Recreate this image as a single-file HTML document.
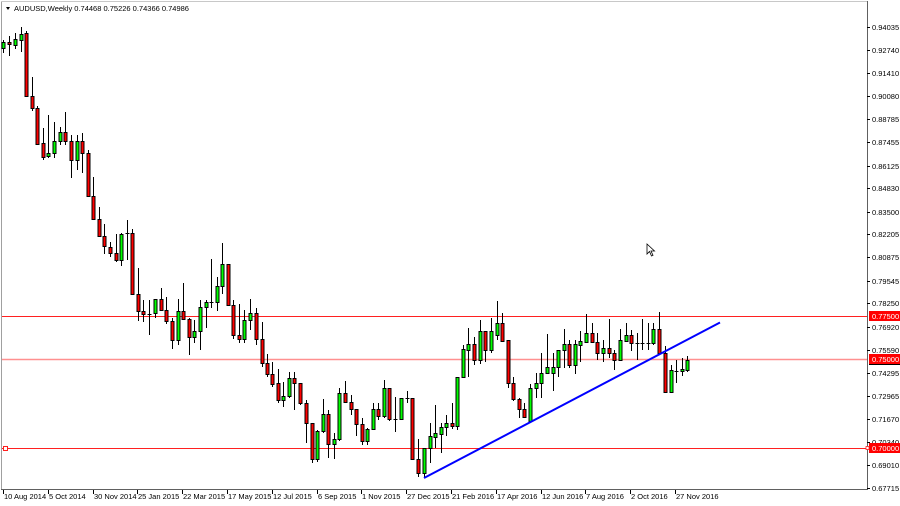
<!DOCTYPE html>
<html><head><meta charset="utf-8"><style>
html,body{margin:0;padding:0;background:#fff;width:900px;height:506px;overflow:hidden}
svg{display:block}
text{font-family:"Liberation Sans","DejaVu Sans",sans-serif;font-size:7.5px;fill:#000}
</style></head><body>
<svg id="s" width="900" height="506" xmlns="http://www.w3.org/2000/svg">
<rect x="0" y="0" width="900" height="506" fill="#fff"/>
<line x1="1.5" y1="1" x2="1.5" y2="490" stroke="#a0a0a0"/>
<line x1="1" y1="1.5" x2="868" y2="1.5" stroke="#c8c8c8"/>
<line x1="867.5" y1="1" x2="867.5" y2="490" stroke="#606060"/>
<line x1="1" y1="489.5" x2="868" y2="489.5" stroke="#606060"/>
<polygon points="6,7 10,7 8,10" fill="#000"/>
<text x="14" y="11">AUDUSD,Weekly  0.74468 0.75226 0.74366 0.74986</text>
<g id="lines">
<line x1="2" y1="316.5" x2="867" y2="316.5" stroke="#ff2020"/>
<line x1="2" y1="359.5" x2="867" y2="359.5" stroke="#ff9090" stroke-width="1.5"/>
<line x1="2" y1="448.5" x2="867" y2="448.5" stroke="#ff2020"/>
<rect x="3.5" y="446.5" width="4" height="4" fill="#fff" stroke="#ff2020"/>
</g>
<g id="c"></g>
<line x1="424" y1="478" x2="720" y2="322.5" stroke="#0000ff" stroke-width="2"/>
<g id="ax"></g>
<g transform="translate(647,244)"><path d="M0,0 L0,10 L2.5,7.5 L4.5,12 L6,11.3 L4,7 L7.5,7 Z" fill="#fff" stroke="#000" stroke-width="0.8"/></g>
<rect x="869" y="311" width="31" height="10" fill="#ff0000"/>
<text x="872" y="319" style="fill:#fff">0.77500</text>
<rect x="869" y="354" width="31" height="10" fill="#ff0000"/>
<line x1="869" y1="364.5" x2="900" y2="364.5" stroke="#000"/>
<text x="872" y="362" style="fill:#fff">0.75000</text>
<rect x="869" y="443" width="31" height="10" fill="#ff0000"/>
<text x="872" y="451" style="fill:#fff">0.70000</text>
<rect x="866" y="446.5" width="3" height="3" fill="#fff" stroke="#ff2020" stroke-width="0.8"/>
</svg>
<script>
var ns="http://www.w3.org/2000/svg";
function el(p,t,a,tx){var e=document.createElementNS(ns,t);for(var k in a)e.setAttribute(k,a[k]);if(tx)e.textContent=tx;p.appendChild(e);return e;}
var d=[
[3,48,42,40,53],[9,42,44,36,56],[15,45,39,33,49],[21,40,34,27,52],[26,33,96,31,96],[32,96,108,77,111],
[37,108,144,106,145],[43,143,157,128,160],[48,156,153,115,158],[54,153,141,122,158],[60,141,132,127,145],
[65,132,141,112,145],[71,141,160,135,178],[77,160,141,135,170],[82,141,153,133,173],[88,153,196,150,197],
[93,196,219,177,220],[99,219,236,207,237],[104,236,246,224,254],[110,247,253,242,257],[116,253,260,234,262],
[121,260,234,233,266],[127,233,233,220,260],[132,233,294,229,295],[138,294,311,268,321],[143,311,314,300,322],
[149,314,314,300,335],[155,313,299,299,318],[161,299,310,288,310],[166,310,321,297,324],[172,321,340,318,349],
[178,340,311,299,345],[183,311,319,283,320],[189,319,337,318,355],[194,337,331,320,343],[200,331,307,300,350],
[206,307,302,300,328],[211,302,302,259,308],[217,302,286,277,311],[222,286,264,243,294],[228,264,305,264,306],
[233,305,335,300,339],[239,335,339,304,343],[244,339,320,310,343],[250,320,313,299,330],[256,313,339,308,345],
[262,339,363,322,367],[267,363,374,354,377],[272,374,384,362,387],[278,383,400,369,403],[283,400,396,382,407],
[289,396,378,372,398],[294,378,383,372,410],[300,383,403,383,405],[306,403,423,400,443],[312,423,459,423,463],
[317,459,431,430,462],[323,431,414,399,433],[328,414,444,410,458],[334,444,439,433,459],[339,439,393,388,441],
[345,393,402,381,403],[351,402,409,395,415],[356,409,424,409,436],[362,424,441,418,445],[367,441,429,428,445],
[373,429,409,403,430],[378,409,416,403,420],[384,416,388,380,418],[389,388,419,388,421],[395,419,419,397,432],
[401,419,398,398,420],[407,398,398,391,403],[412,398,459,398,460],[418,459,473,439,477],[424,473,448,450,478],
[430,448,436,423,463],[435,437,433,405,448],[441,434,427,423,453],[446,427,423,415,436],[452,423,426,403,429],
[457,426,377,377,430],[463,377,349,345,377],[468,350,344,328,377],[474,344,360,337,365],[480,360,331,320,364],
[485,331,350,331,362],[491,350,331,318,353],[497,335,323,301,340],[502,323,341,313,342],[508,340,383,340,388],
[513,383,399,377,401],[519,399,409,398,418],[524,409,417,403,417],[530,421,388,384,421],[536,388,383,373,398],
[541,383,373,353,398],[547,373,367,334,373],[553,373,367,353,391],[558,367,350,350,377],[564,350,344,329,368],
[569,344,365,340,368],[575,365,344,340,374],[580,345,341,331,362],[586,342,333,314,342],[592,333,342,323,343],
[597,342,353,333,360],[603,353,348,340,362],[609,348,353,319,358],[614,353,360,350,370],[620,360,340,329,360],
[626,341,335,323,342],[631,335,343,330,351],[637,343,343,333,360],[642,343,343,319,350],[648,343,343,323,350],
[653,343,329,323,345],[659,329,353,312,354],[665,353,392,346,393],[671,392,370,365,393],[676,371,371,360,383],
[682,371,369,358,376],[687,370,360,356,372]
];
var g=document.getElementById("c");
d.forEach(function(a){var x=a[0],o=a[1],c=a[2],h=a[3],l=a[4];
el(g,"line",{x1:x+0.5,y1:h,x2:x+0.5,y2:l,stroke:"#000","stroke-width":1});
var t=Math.min(o,c),b=Math.max(o,c);
if(b-t<1){el(g,"line",{x1:x-1.5,y1:t+0.5,x2:x+2.5,y2:t+0.5,stroke:"#000"});}
else el(g,"rect",{x:x-1,y:t+0.5,width:3,height:b-t,fill:o>c?"#00ff00":"#ff0000",stroke:"#000","stroke-width":1});
});
var ax=document.getElementById("ax");
var lab=["0.94035","0.92740","0.91410","0.90080","0.88785","0.87455","0.86125","0.84830","0.83500","0.82205","0.80875","0.79545","0.78250","0.76920","0.75590","0.74295","0.72965","0.71670","0.70340","0.69010","0.67715"];
lab.forEach(function(s){var p=parseFloat(s);var y=Math.round(27+(0.94035-p)*1751.5);
el(ax,"line",{x1:867,y1:y+0.5,x2:870,y2:y+0.5,stroke:"#000"});
el(ax,"text",{x:872,y:y+3},s);});
var dt=["10 Aug 2014","5 Oct 2014","30 Nov 2014","25 Jan 2015","22 Mar 2015","17 May 2015","12 Jul 2015","6 Sep 2015","1 Nov 2015","27 Dec 2015","21 Feb 2016","17 Apr 2016","12 Jun 2016","7 Aug 2016","2 Oct 2016","27 Nov 2016"];
dt.forEach(function(s,i){var x=Math.round(3+i*44.8);
el(ax,"line",{x1:x+0.5,y1:490,x2:x+0.5,y2:494,stroke:"#000"});
el(ax,"text",{x:x+1,y:499},s);});
</script>
</body></html>
